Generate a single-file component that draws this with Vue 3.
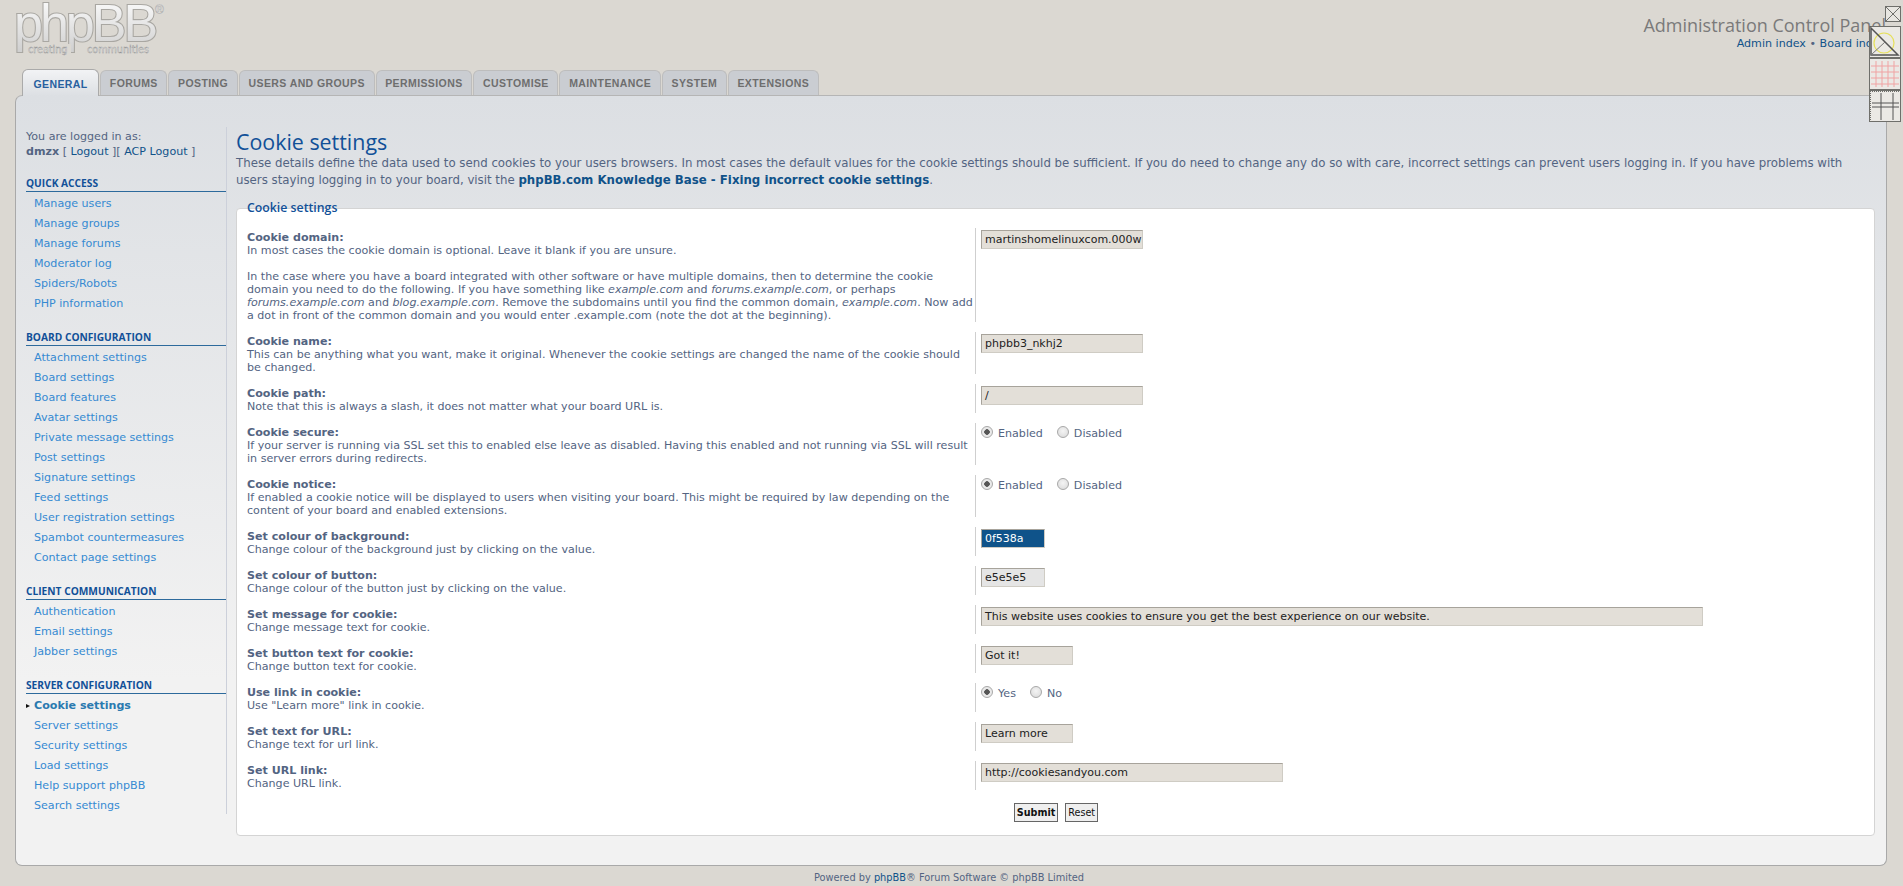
<script setup>
const tabs = ['General','Forums','Posting','Users and groups','Permissions','Customise','Maintenance','System','Extensions']
const menu = [
  { title: 'Quick access', items: ['Manage users','Manage groups','Manage forums','Moderator log','Spiders/Robots','PHP information'] },
  { title: 'Board configuration', items: ['Attachment settings','Board settings','Board features','Avatar settings','Private message settings','Post settings','Signature settings','Feed settings','User registration settings','Spambot countermeasures','Contact page settings'] },
  { title: 'Client communication', items: ['Authentication','Email settings','Jabber settings'] },
  { title: 'Server configuration', items: ['Cookie settings','Server settings','Security settings','Load settings','Help support phpBB','Search settings'] },
]
const rows = [
  { label: 'Cookie name:', desc: 'This can be anything what you want, make it original. Whenever the cookie settings are changed the name of the cookie should be changed.', value: 'phpbb3_nkhj2', cls: 'w170' },
  { label: 'Cookie path:', desc: 'Note that this is always a slash, it does not matter what your board URL is.', value: '/', cls: 'w170' },
  { label: 'Cookie secure:', desc: 'If your server is running via SSL set this to enabled else leave as disabled. Having this enabled and not running via SSL will result in server errors during redirects.', radio: ['Enabled','Disabled'] },
  { label: 'Cookie notice:', desc: 'If enabled a cookie notice will be displayed to users when visiting your board. This might be required by law depending on the content of your board and enabled extensions.', radio: ['Enabled','Disabled'] },
  { label: 'Set colour of background:', desc: 'Change colour of the background just by clicking on the value.', value: '0f538a', cls: 'w64 blue' },
  { label: 'Set colour of button:', desc: 'Change colour of the button just by clicking on the value.', value: 'e5e5e5', cls: 'w64 grey' },
  { label: 'Set message for cookie:', desc: 'Change message text for cookie.', value: 'This website uses cookies to ensure you get the best experience on our website.', cls: 'w735' },
  { label: 'Set button text for cookie:', desc: 'Change button text for cookie.', value: 'Got it!', cls: 'w94' },
  { label: 'Use link in cookie:', desc: 'Use "Learn more" link in cookie.', radio: ['Yes','No'] },
  { label: 'Set text for URL:', desc: 'Change text for url link.', value: 'Learn more', cls: 'w94' },
  { label: 'Set URL link:', desc: 'Change URL link.', value: 'http://cookiesandyou.com', cls: 'w302' },
]
</script>

<template>
  <div class="page">
    <header class="head">
      <svg class="logo" width="160" height="60" viewBox="0 0 160 60" role="img" aria-label="phpBB">
        <defs>
          <linearGradient id="lg" x1="0" y1="0" x2="0" y2="1">
            <stop offset="0" stop-color="#ffffff" />
            <stop offset="1" stop-color="#cfcfcf" />
          </linearGradient>
        </defs>
        <text x="0" y="41" class="logo-main" fill="url(#lg)" stroke="#a9a7a2" stroke-width="2.2" paint-order="stroke">phpBB</text>
        <text x="141" y="14" class="logo-r" fill="#f2f2f2" stroke="#999" stroke-width="0.3">®</text>
        <rect x="12" y="44" width="45" height="13" fill="#dbd8d2" />
        <text x="14" y="53" class="logo-sub" fill="#f6f6f6" stroke="#8f8f8f" stroke-width="0.4">creating</text>
        <text x="73" y="53" class="logo-sub" fill="#f6f6f6" stroke="#8f8f8f" stroke-width="0.4">communities</text>
      </svg>
      <div class="head-right">
        <div class="acp-title">Administration Control Panel</div>
        <div class="acp-links"><a>Admin index</a> • <a>Board index</a></div>
      </div>
    </header>

    <nav class="tabs">
      <a v-for="(t, i) in tabs" :key="t" class="tab" :class="{ active: i === 0 }">{{ t }}</a>
    </nav>

    <div class="panel">
      <aside class="side">
        <p class="who">You are logged in as:<br><b>dmzx</b> [ <a>Logout</a> ][ <a>ACP Logout</a> ]</p>
        <section v-for="m in menu" :key="m.title" class="block">
          <h3>{{ m.title }}</h3>
          <ul>
            <li v-for="it in m.items" :key="it" :class="{ cur: it === 'Cookie settings' }">{{ it }}</li>
          </ul>
        </section>
      </aside>

      <main class="main">
        <h1>Cookie settings</h1>
        <p class="intro">These details define the data used to send cookies to your users browsers. In most cases the default values for the cookie settings should be sufficient. If you do need to change any do so with care, incorrect settings can prevent users logging in. If you have problems with users staying logging in to your board, visit the <a>phpBB.com Knowledge Base - Fixing incorrect cookie settings</a>.</p>

        <div class="fieldset">
          <div class="legend">Cookie settings</div>
          <div class="row">
            <div class="dt wide">
              <b>Cookie domain:</b><br>
              In most cases the cookie domain is optional. Leave it blank if you are unsure.<br><br>
              In the case where you have a board integrated with other software or have multiple domains, then to determine the cookie domain you need to do the following. If you have something like <i>example.com</i> and <i>forums.example.com</i>, or perhaps <i>forums.example.com</i> and <i>blog.example.com</i>. Remove the subdomains until you find the common domain, <i>example.com</i>. Now add a dot in front of the common domain and you would enter .example.com (note the dot at the beginning).
            </div>
            <div class="dd"><span class="input w170">martinshomelinuxcom.000w</span></div>
          </div>
          <div v-for="r in rows" :key="r.label" class="row">
            <div class="dt"><b>{{ r.label }}</b><br>{{ r.desc }}</div>
            <div class="dd">
              <span v-if="r.value" class="input" :class="r.cls">{{ r.value }}</span>
              <span v-else class="radios">
                <span v-for="(o, i) in r.radio" :key="o" class="radio-item"><span class="radio" :class="{ on: i === 0 }"></span>{{ o }}</span>
              </span>
            </div>
          </div>
          <div class="actions">
            <button class="btn strong" type="button">Submit</button>
            <button class="btn" type="button">Reset</button>
          </div>
        </div>
      </main>
    </div>

    <footer class="foot">
      <div>Powered by <a>phpBB</a>® Forum Software © phpBB Limited</div>
      <div>Time: 0.158s | Queries: 7 | Peak Memory Usage: 10.77 MiB</div>
    </footer>

    <div class="tools">
      <svg class="tool-x" width="16" height="16" viewBox="0 0 16 16">
        <rect x="0.5" y="0.5" width="15" height="15" fill="#e8e6e1" stroke="#6f6f6b" />
        <path d="M1 1 15 15M15 1 1 15" stroke="#6f6f6b" fill="none" />
      </svg>
      <svg width="32" height="32" viewBox="0 0 32 32">
        <rect x="0.5" y="0.5" width="31" height="31" fill="#ebe9e5" stroke="#6f6f6b" />
        <circle cx="15" cy="17" r="10" fill="none" stroke="#e6e05a" stroke-width="1.2" />
        <path d="M2 2 29 29H2Z" fill="none" stroke="#555" stroke-width="1.5" />
        <path d="M2 29 16 16" stroke="#777" fill="none" />
      </svg>
      <svg width="32" height="32" viewBox="0 0 32 32">
        <rect x="0.5" y="0.5" width="31" height="31" fill="#ebe9e5" stroke="#6f6f6b" />
        <path d="M2 8H30M2 14H30M2 20H30M2 26H30M7 3V29M13 3V29M19 3V29M25 3V29" fill="none" stroke="#f0a3a3" />
      </svg>
      <svg width="32" height="32" viewBox="0 0 32 32">
        <rect x="0.5" y="0.5" width="31" height="31" fill="#ebe9e5" stroke="#6f6f6b" />
        <path d="M1 1H31" stroke="#6f6f6b" stroke-width="2" stroke-dasharray="1 1" />
        <path d="M1 1V31" stroke="#6f6f6b" stroke-width="2" stroke-dasharray="1 1" />
        <path d="M3 13H30M3 17H30M12 3V30M24 3V30" fill="none" stroke="#555" />
      </svg>
    </div>
  </div>
</template>

<style>
html, body { margin: 0; height: 100%; overflow: hidden; background: #dbd8d2; }
</style>

<style scoped>
.page {
  position: relative;
  height: 886px;
  overflow: hidden;
  background: #dbd8d2;
  font-family: "DejaVu Sans", Verdana, sans-serif;
  font-size: 11.1px;
  line-height: 13px;
  color: #536482;
}
a { color: #105289; }
.head { height: 69px; display: flex; justify-content: space-between; }
.logo { margin: 0 0 0 14px; }
.logo-main { font-family: "Liberation Sans", sans-serif; font-size: 52px; letter-spacing: -3px; }
.logo-r { font-family: "Liberation Sans", sans-serif; font-size: 12px; }
.logo-sub { font-family: "DejaVu Sans", sans-serif; font-size: 9.6px; }
.head-right { padding: 15px 17px 0 0; text-align: right; }
.acp-title { font-family: "Open Sans", sans-serif; font-size: 18px; line-height: 20px; color: #7a7a7a; }
.acp-links { line-height: 13px; margin-top: 2px; }
.tabs { display: flex; gap: 1px; height: 26px; padding-left: 22px; align-items: flex-end; }
.tab {
  display: block;
  box-sizing: border-box;
  height: 25px;
  padding: 0 8.7px;
  border: 1px solid #bdbdbd;
  border-bottom: 0;
  border-radius: 6px 6px 0 0;
  background: #cacdd2;
  color: #6e6e6e;
  font-family: "Liberation Sans", sans-serif;
  font-size: 10.5px;
  font-weight: 700;
  line-height: 25px;
  letter-spacing: 0.4px;
  text-transform: uppercase;
}
.tab.active {
  height: 27px;
  margin-bottom: -1px;
  padding: 0 10.5px;
  position: relative;
  background: linear-gradient(#f2f3f5, #dcdfe3);
  border-color: #aaa;
  color: #28609f;
  line-height: 28px;
}
.panel {
  display: flex;
  box-sizing: border-box;
  margin: 0 16px 0 15px;
  height: 771px;
  padding: 31px 11px 0 10px;
  border: 1px solid #a9a9a9;
  border-top-color: #b5b5b5;
  border-radius: 7px;
  background: linear-gradient(#dcdfe3, #f2f2f2 76%);
  gap: 9px;
}
.side { width: 200px; height: 687px; flex: none; border-right: 1px solid #ccd0da; }
.who { margin: 0; padding: 2px 0 0; line-height: 15px; }
.who b { color: #536482; }
.block h3 {
  margin: 16px 0 0;
  height: 15px;
  border-bottom: 1px solid #2d6a9c;
  font-family: "Open Sans", sans-serif;
  font-size: 10.2px;
  line-height: 14px;
  font-weight: 700;
  color: #115098;
  text-transform: uppercase;
}
.block:first-of-type h3 { margin-top: 17px; }
.block ul { margin: 0; padding: 2px 0 0; list-style: none; }
.block li { height: 20px; line-height: 20px; padding-left: 8px; color: #368ad2; position: relative; }
.cur { font-weight: 700; color: #2a7ab0 !important; }
.cur::before {
  content: "";
  position: absolute;
  left: 0;
  top: 8px;
  border-left: 4px solid #111;
  border-top: 2.5px solid transparent;
  border-bottom: 2.5px solid transparent;
}
.main { flex: 1; min-width: 0; padding-top: 2px; }
h1 { margin: 0; font-family: "Open Sans", sans-serif; font-size: 21.4px; line-height: 26px; font-weight: 400; color: #115098; }
.intro { margin: 0; font-size: 11.77px; line-height: 17px; }
.intro a { font-weight: 700; }
.fieldset {
  position: relative;
  box-sizing: border-box;
  height: 628px;
  margin-top: 19px;
  padding: 22px 10px 0;
  background: #fff;
  border: 1px solid #d4d4d4;
  border-radius: 4px;
}
.legend {
  position: absolute;
  left: 10px;
  top: -8px;
  font-family: "Open Sans", sans-serif;
  font-size: 12.3px;
  line-height: 14px;
  font-weight: 600;
  color: #115098;
}
.row { display: flex; padding-bottom: 13px; }
.dt { width: 728px; flex: none; box-sizing: border-box; padding-right: 5px; }
.dt.wide { padding-right: 0; }
.dt b { font-weight: 700; }
.dd { border-left: 1px solid #cfcfcf; margin-top: -3px; padding: 2px 0 0 5px; }
.input {
  display: block;
  box-sizing: border-box;
  height: 19px;
  padding: 0 3px;
  overflow: hidden;
  white-space: nowrap;
  background: #e3dfd8;
  border: 1px solid;
  border-color: #a7a39b #cfccc4 #cfccc4 #a7a39b;
  color: #222;
  font-size: 11px;
  line-height: 17px;
}
.w170 { width: 162px; }
.w64 { width: 64px; }
.w735 { width: 722px; }
.w94 { width: 92px; }
.w302 { width: 302px; }
.blue { background: #0f538a; color: #fff; }
.grey { background: #e5e5e5; }
.radios { display: flex; gap: 14px; padding-top: 2px; }
.radio-item { display: flex; color: #536482; }
.radio {
  width: 12px;
  height: 12px;
  box-sizing: border-box;
  margin: -1px 5px 0 0;
  border: 1px solid #a8a8a8;
  border-radius: 50%;
  background: radial-gradient(circle at 50% 40%, #f4f4f4, #d8d8d8);
}
.radio.on { background: radial-gradient(circle, #555 0 2.5px, #e9e9e9 3px); }
.actions { display: flex; justify-content: center; gap: 7px; margin-left: 1px; }
.btn {
  height: 19px;
  padding: 0 2px;
  background: #efefef;
  border: 1px solid #666;
  color: #111;
  font-family: "DejaVu Sans", sans-serif;
  font-size: 9.6px;
  line-height: 16px;
}
.strong { font-weight: 700; }
.foot { text-align: center; padding: 5px 5px 0 0; font-size: 9.8px; line-height: 13px; color: #536482; }
.tools { position: absolute; right: 2px; top: 6px; display: flex; flex-direction: column; align-items: flex-end; }
.tools svg { display: block; }
.tool-x { margin-bottom: 4px; }
</style>
